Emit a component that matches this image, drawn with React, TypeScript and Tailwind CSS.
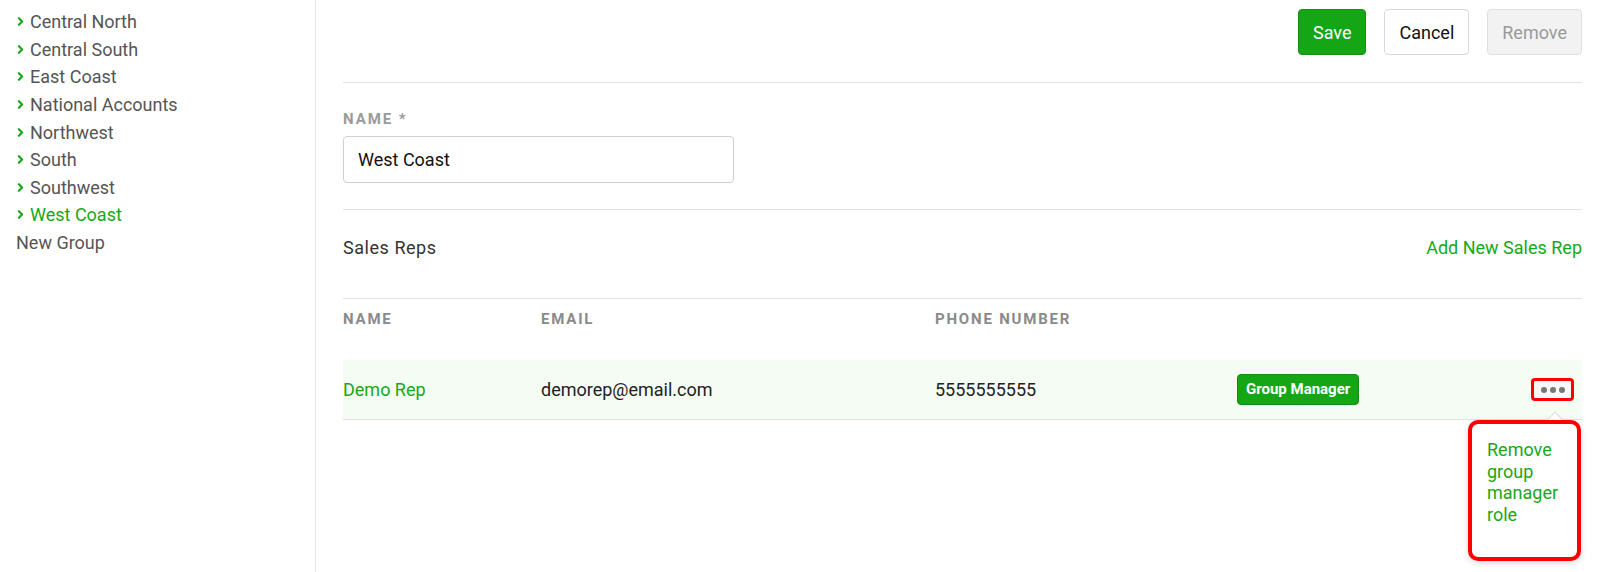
import { ChevronRight } from 'lucide-react'

const groups = [
  'Central North',
  'Central South',
  'East Coast',
  'National Accounts',
  'Northwest',
  'South',
  'Southwest',
  'West Coast',
]

export default function App() {
  return (
    <div className="flex h-[572px] w-[1600px] bg-white font-['Roboto',sans-serif] overflow-hidden">
      {/* Sidebar */}
      <aside className="w-[316px] shrink-0 border-r border-[#e6e6e6] pt-[8px] pl-[16px]">
        {groups.map((g) => (
          <div key={g} className="flex items-center h-[27.6px] text-[18px]">
            <ChevronRight className="h-[13px] w-[13px] text-[#17a817] -ml-[2px] mr-[3px]" strokeWidth={4} />
            <span className={g === 'West Coast' ? 'text-[#17a817]' : 'text-[#555]'}>{g}</span>
          </div>
        ))}
        <div className="flex items-center h-[27.6px] text-[18px] text-[#555]">New Group</div>
      </aside>

      {/* Main */}
      <main className="flex-1 pl-[27px] pr-[18px]">
        <div className="flex justify-end gap-[18px] pt-[9px] pb-[27px] border-b border-[#e2e2e2]">
          <button className="h-[46px] px-[14px] rounded-[4px] bg-[#15a615] border border-[#119011] text-white text-[18px]">
            Save
          </button>
          <button className="h-[46px] px-[14px] rounded-[4px] bg-white border border-[#d8d8d8] text-[#111] text-[18px]">
            Cancel
          </button>
          <button className="h-[46px] px-[14px] rounded-[4px] bg-[#f2f2f2] border border-[#e0e0e0] text-[#9a9a9a] text-[18px]">
            Remove
          </button>
        </div>

        <div className="pt-[27px] pb-[26px] border-b border-[#e2e2e2]">
          <div className="text-[15px] font-bold tracking-[0.13em] text-[#9a9a9a] leading-[18px]">NAME *</div>
          <div className="mt-[8px] w-[391px] h-[47px] border border-[#cfcfcf] rounded-[4px] flex items-center px-[14px] text-[18px] text-[#111]">
            West Coast
          </div>
        </div>

        <div className="flex items-start justify-between h-[89px] pt-[26px] border-b border-[#e2e2e2] leading-[24px]">
          <span className="text-[18px] tracking-[0.03em] text-[#333]">Sales Reps</span>
          <span className="text-[18px] text-[#17a817]">Add New Sales Rep</span>
        </div>

        <div className="grid grid-cols-[198px_394px_302px_1fr] items-center h-[40px] pt-[1px] text-[15px] font-bold tracking-[0.12em] text-[#8a8a8a]">
          <span>NAME</span>
          <span>EMAIL</span>
          <span>PHONE NUMBER</span>
          <span></span>
        </div>

        <div className="relative mt-[21px]">
          <div className="grid grid-cols-[198px_394px_302px_1fr] items-center h-[60px] bg-[#f5fcf3] border-b border-[#e2e2e2] text-[18px]">
            <span className="text-[#17a817]">Demo Rep</span>
            <span className="text-[#222]">demorep@email.com</span>
            <span className="text-[#222]">5555555555</span>
            <div className="flex items-center justify-between pr-[8px]">
              <span className="h-[31px] px-[8px] flex items-center rounded-[4px] bg-[#15a615] border border-[#0f8d0f] text-white text-[15px] font-bold">
                Group Manager
              </span>
              <span className="w-[43px] h-[23px] flex items-center justify-center gap-[3px] rounded-[4px] border-[3px] border-[#ff0000] bg-[#f7f7f7]">
                <span className="w-[6px] h-[6px] rounded-full bg-[#777]"></span>
                <span className="w-[6px] h-[6px] rounded-full bg-[#777]"></span>
                <span className="w-[6px] h-[6px] rounded-full bg-[#777]"></span>
              </span>
            </div>
          </div>

          {/* Dropdown */}
          <div className="absolute right-[21px] top-[54px] w-[12px] h-[12px] rotate-45 bg-white border-t border-l border-[#dcdcdc] z-10"></div>
          <div className="absolute right-[1px] top-[60px] w-[113px] h-[141px] rounded-[10px] border-[4px] border-[#ff0000] bg-white shadow-[0_2px_6px_rgba(0,0,0,0.15)] z-20 pl-[15px] pr-[4px] pt-[15px]">
            <div className="text-[18px] leading-[21.5px] text-[#17a817]">
              Remove group manager role
            </div>
          </div>
        </div>
      </main>
    </div>
  )
}
